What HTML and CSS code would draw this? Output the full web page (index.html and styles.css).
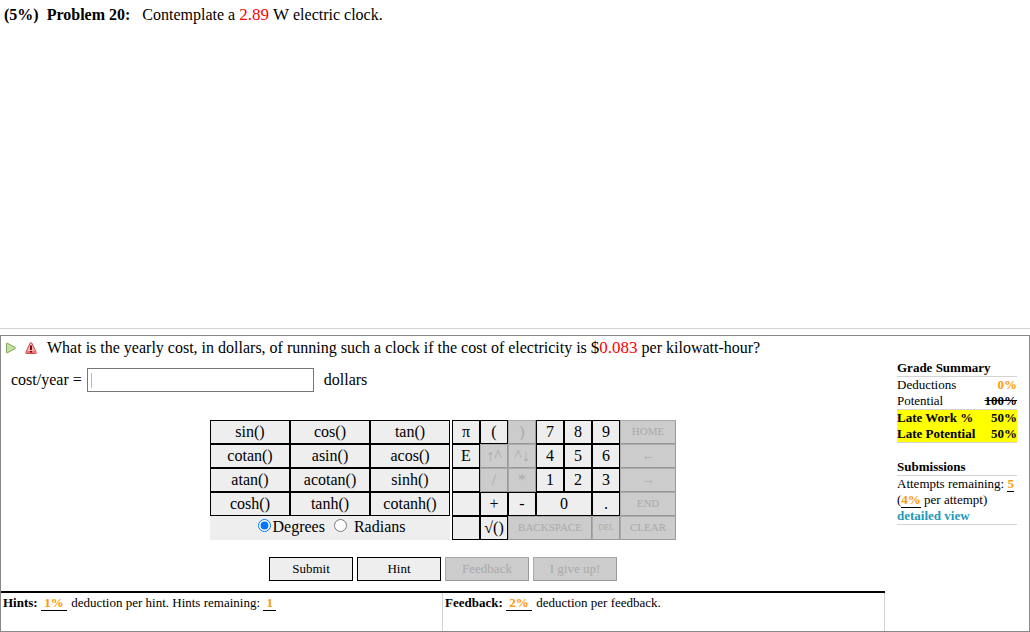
FILE: index.html
```html
<!DOCTYPE html>
<html lang="en">

<head>
  <meta charset="UTF-8">
  <meta name="viewport" content="width=device-width, initial-scale=1.0">
  <title>Problem 20</title>
  <link rel="stylesheet" href="styles.css">
</head>

<body>
  <div class="statement">
    <b>(5%)&nbsp; Problem 20:</b>&nbsp;&nbsp; Contemplate a <span class="math value">2.89</span> <span class="math">W</span> electric clock.
  </div>

  <form class="panel">
    <div class="work">
      <!-- Question -->
      <div class="question">
        <svg class="icon" viewBox="0 0 12 14" aria-hidden="true">
          <path d="M1.5 2.5 Q1.5 1.8 2.2 2.1 L10 6.3 Q10.8 7 10 7.7 L2.2 11.9 Q1.5 12.2 1.5 11.5 Z" fill="#c6e29a" stroke="#82a566" />
        </svg>
        <svg class="icon" viewBox="0 0 12 14" aria-hidden="true">
          <path d="M5.2 2 Q6 1 6.8 2 L11.3 11.5 Q11.6 12.5 10.8 12.5 H1.2 Q.4 12.5 .7 11.5 Z" fill="#f8b4b4" stroke="#cc4a50" />
          <path d="M1.5 11 H10.5" stroke="#ec7476" stroke-width="2" />
          <path d="M6 4.5 V9 M6 10 V11.5" stroke="#7a0c12" stroke-width="2" />
        </svg>
        <span class="question-text">What is the yearly cost, in dollars, of running such a clock if the cost of electricity is <span class="math">$<span class="value">0.083</span></span> per kilowatt-hour?</span>
      </div>
      <div class="answer">
        <label for="answerInput">cost/year =</label>
        <span class="answer-box"><input type="text" id="answerInput"></span>
        <span class="unit">dollars</span>
      </div>

      <!-- Calculator keypad -->
      <div class="keypad">
        <div class="functions">
          <button type="button">sin()</button>
          <button type="button">cos()</button>
          <button type="button">tan()</button>
          <button type="button">cotan()</button>
          <button type="button">asin()</button>
          <button type="button">acos()</button>
          <button type="button">atan()</button>
          <button type="button">acotan()</button>
          <button type="button">sinh()</button>
          <button type="button">cosh()</button>
          <button type="button">tanh()</button>
          <button type="button">cotanh()</button>
          <div class="angle">
            <input type="radio" name="angle" id="degrees" checked><label for="degrees">Degrees</label>
            <input type="radio" name="angle" id="radians" class="second"><label for="radians">Radians</label>
          </div>
        </div>
        <div class="keys">
          <button type="button">π</button>
          <button type="button">(</button>
          <button type="button" disabled>)</button>
          <button type="button">7</button>
          <button type="button">8</button>
          <button type="button">9</button>
          <button type="button" class="wide word" disabled>HOME</button>
          <button type="button">E</button>
          <button type="button" disabled>↑^</button>
          <button type="button" disabled>^↓</button>
          <button type="button">4</button>
          <button type="button">5</button>
          <button type="button">6</button>
          <button type="button" class="wide arrow" disabled>←</button>
          <button type="button" aria-label="blank"></button>
          <button type="button" disabled>/</button>
          <button type="button" disabled>*</button>
          <button type="button">1</button>
          <button type="button">2</button>
          <button type="button">3</button>
          <button type="button" class="wide arrow" disabled>→</button>
          <button type="button" aria-label="blank"></button>
          <button type="button">+</button>
          <button type="button">-</button>
          <button type="button" class="wide">0</button>
          <button type="button">.</button>
          <button type="button" class="wide word" disabled>END</button>
          <button type="button" aria-label="blank"></button>
          <button type="button">√()</button>
          <button type="button" class="wider word" disabled>BACKSPACE</button>
          <button type="button" class="tiny" disabled>DEL</button>
          <button type="button" class="wide word" disabled>CLEAR</button>
        </div>
      </div>

      <div class="actions">
        <button type="submit">Submit</button>
        <button type="button">Hint</button>
        <button type="button" disabled>Feedback</button>
        <button type="button" disabled>I give up!</button>
      </div>

      <div class="notes">
        <div class="note"><b>Hints:</b>&nbsp;<span class="amount">&nbsp;1%&nbsp;</span>&nbsp;deduction per hint. Hints remaining: <span class="amount">&nbsp;1&nbsp;</span></div>
        <div class="note"><b>Feedback:</b>&nbsp;<span class="amount">&nbsp;2%&nbsp;</span>&nbsp;deduction per feedback.</div>
      </div>
    </div>

    <!-- Grades and attempts -->
    <aside class="summary">
      <table>
        <caption>Grade Summary</caption>
        <tbody>
          <tr><td>Deductions</td><td class="orange">0%</td></tr>
          <tr><td>Potential</td><td><s>100%</s></td></tr>
        </tbody>
        <tbody class="late">
          <tr><td>Late Work %</td><td>50%</td></tr>
          <tr><td>Late Potential</td><td>50%</td></tr>
        </tbody>
      </table>
      <h2>Submissions</h2>
      <div class="attempts">
        <div>Attempts remaining: <span class="amount">5</span></div>
        <div>(<span class="amount">4%</span> per attempt)</div>
        <a href="#">detailed view</a>
      </div>
    </aside>
  </form>
</body>

</html>
```

FILE: styles.css
```css
* {
  box-sizing: border-box;
}

body {
  margin: 0;
  min-height: 100vh;
  display: flex;
  flex-direction: column;
  background: #fff;
  color: #000;
  font-family: "Liberation Serif", "Times New Roman", serif;
  font-size: 16px;
  line-height: 20px;
}

.statement {
  flex: 1;
  padding: 5px 4px;
  border-bottom: 1px solid #d3d3d3;
  margin-bottom: 6px;
}

.math {
  font-size: 17px;
}

.value {
  color: #f00;
}

.panel {
  display: flex;
  border: 1px solid #888;
}

.work {
  flex: 1;
  display: flex;
  flex-direction: column;
}

.question {
  display: flex;
  align-items: center;
  gap: 8px;
  padding: 2px 4px 0;
}

.icon {
  flex: none;
  width: 12px;
  height: 14px;
}

.question-text {
  padding-left: 2px;
}

.answer {
  display: flex;
  align-items: center;
  padding: 10px 10px 0;
}

.answer-box {
  display: flex;
  align-items: center;
  width: 227px;
  height: 24px;
  margin: 0 10px 0 5px;
  padding-left: 3px;
  border: 1px solid #777;
}

/* entry mark at the start of the box */
.answer-box::before {
  content: "";
  width: 1px;
  height: 15px;
  background: #f99;
}

.answer-box input {
  flex: 1;
  min-width: 0;
  border: none;
  outline: none;
  background: none;
  font: inherit;
}

.keypad {
  display: flex;
  justify-content: center;
  gap: 2px;
  margin-top: 28px;
}

.functions {
  display: grid;
  grid-template-columns: repeat(3, 80px);
  grid-auto-rows: 24px;
  background: #eee;
}

.angle {
  grid-column: span 3;
  display: flex;
  align-items: center;
  justify-content: center;
  padding-bottom: 2px;
}

.angle input {
  width: 13px;
  height: 13px;
  margin: 0 2px 4px 3px;
}

.angle input.second {
  margin: 0 7px 4px 9px;
}

.keys {
  display: grid;
  grid-template-columns: repeat(8, 28px);
  grid-auto-rows: 24px;
}

button {
  padding: 0;
  background: #eee;
  border: 1px solid #000;
  border-radius: 0;
  color: #000;
  font: inherit;
  line-height: 20px;
  white-space: nowrap;
}

button:disabled {
  background: #ccc;
  border-color: #aaa #999 #999 #aaa;
  color: #aaa;
}

.wide {
  grid-column: span 2;
}

.wider {
  grid-column: span 3;
}

.keys .word {
  padding-bottom: 2px;
  font-size: 11px;
}

.keys .arrow {
  font-size: 13px;
}

.keys .tiny {
  font-size: 8px;
}

.actions {
  display: flex;
  justify-content: center;
  gap: 4px;
  margin: 17px 0 10px;
}

.actions button {
  width: 84px;
  height: 24px;
  font-size: 13px;
}

.notes {
  display: grid;
  grid-template-columns: 1fr 1fr;
  border-top: 2px solid #000;
  font-size: 13px;
}

.note {
  min-height: 38px;
  padding: 0 2px;
  border-right: 1px solid #d3d3d3;
}

.note .amount {
  margin-right: 1px;
}

.amount {
  border-bottom: 1px solid #000;
  color: #f90;
  font-weight: bold;
}

.orange {
  color: #f90;
}

.summary {
  width: 144px;
  padding: 24px 12px;
  font-size: 13px;
  line-height: 16px;
}

.summary table {
  width: 100%;
  border-collapse: collapse;
}

.summary caption,
.summary h2 {
  margin: 0;
  font-size: 13px;
  font-weight: bold;
  text-align: left;
}

.summary td {
  padding: 0;
}

.summary td:last-child {
  font-weight: bold;
  text-align: right;
}

.summary tbody,
.attempts {
  border-top: 1px solid #d3d3d3;
}

.summary .late {
  border-bottom: 1px solid #d3d3d3;
  background: #ff0;
  font-weight: bold;
}

.summary h2 {
  margin-top: 16px;
}

.attempts {
  border-bottom: 1px solid #d3d3d3;
  white-space: nowrap;
}

.attempts a {
  color: #29b;
  font-weight: bold;
  text-decoration: none;
}
```
